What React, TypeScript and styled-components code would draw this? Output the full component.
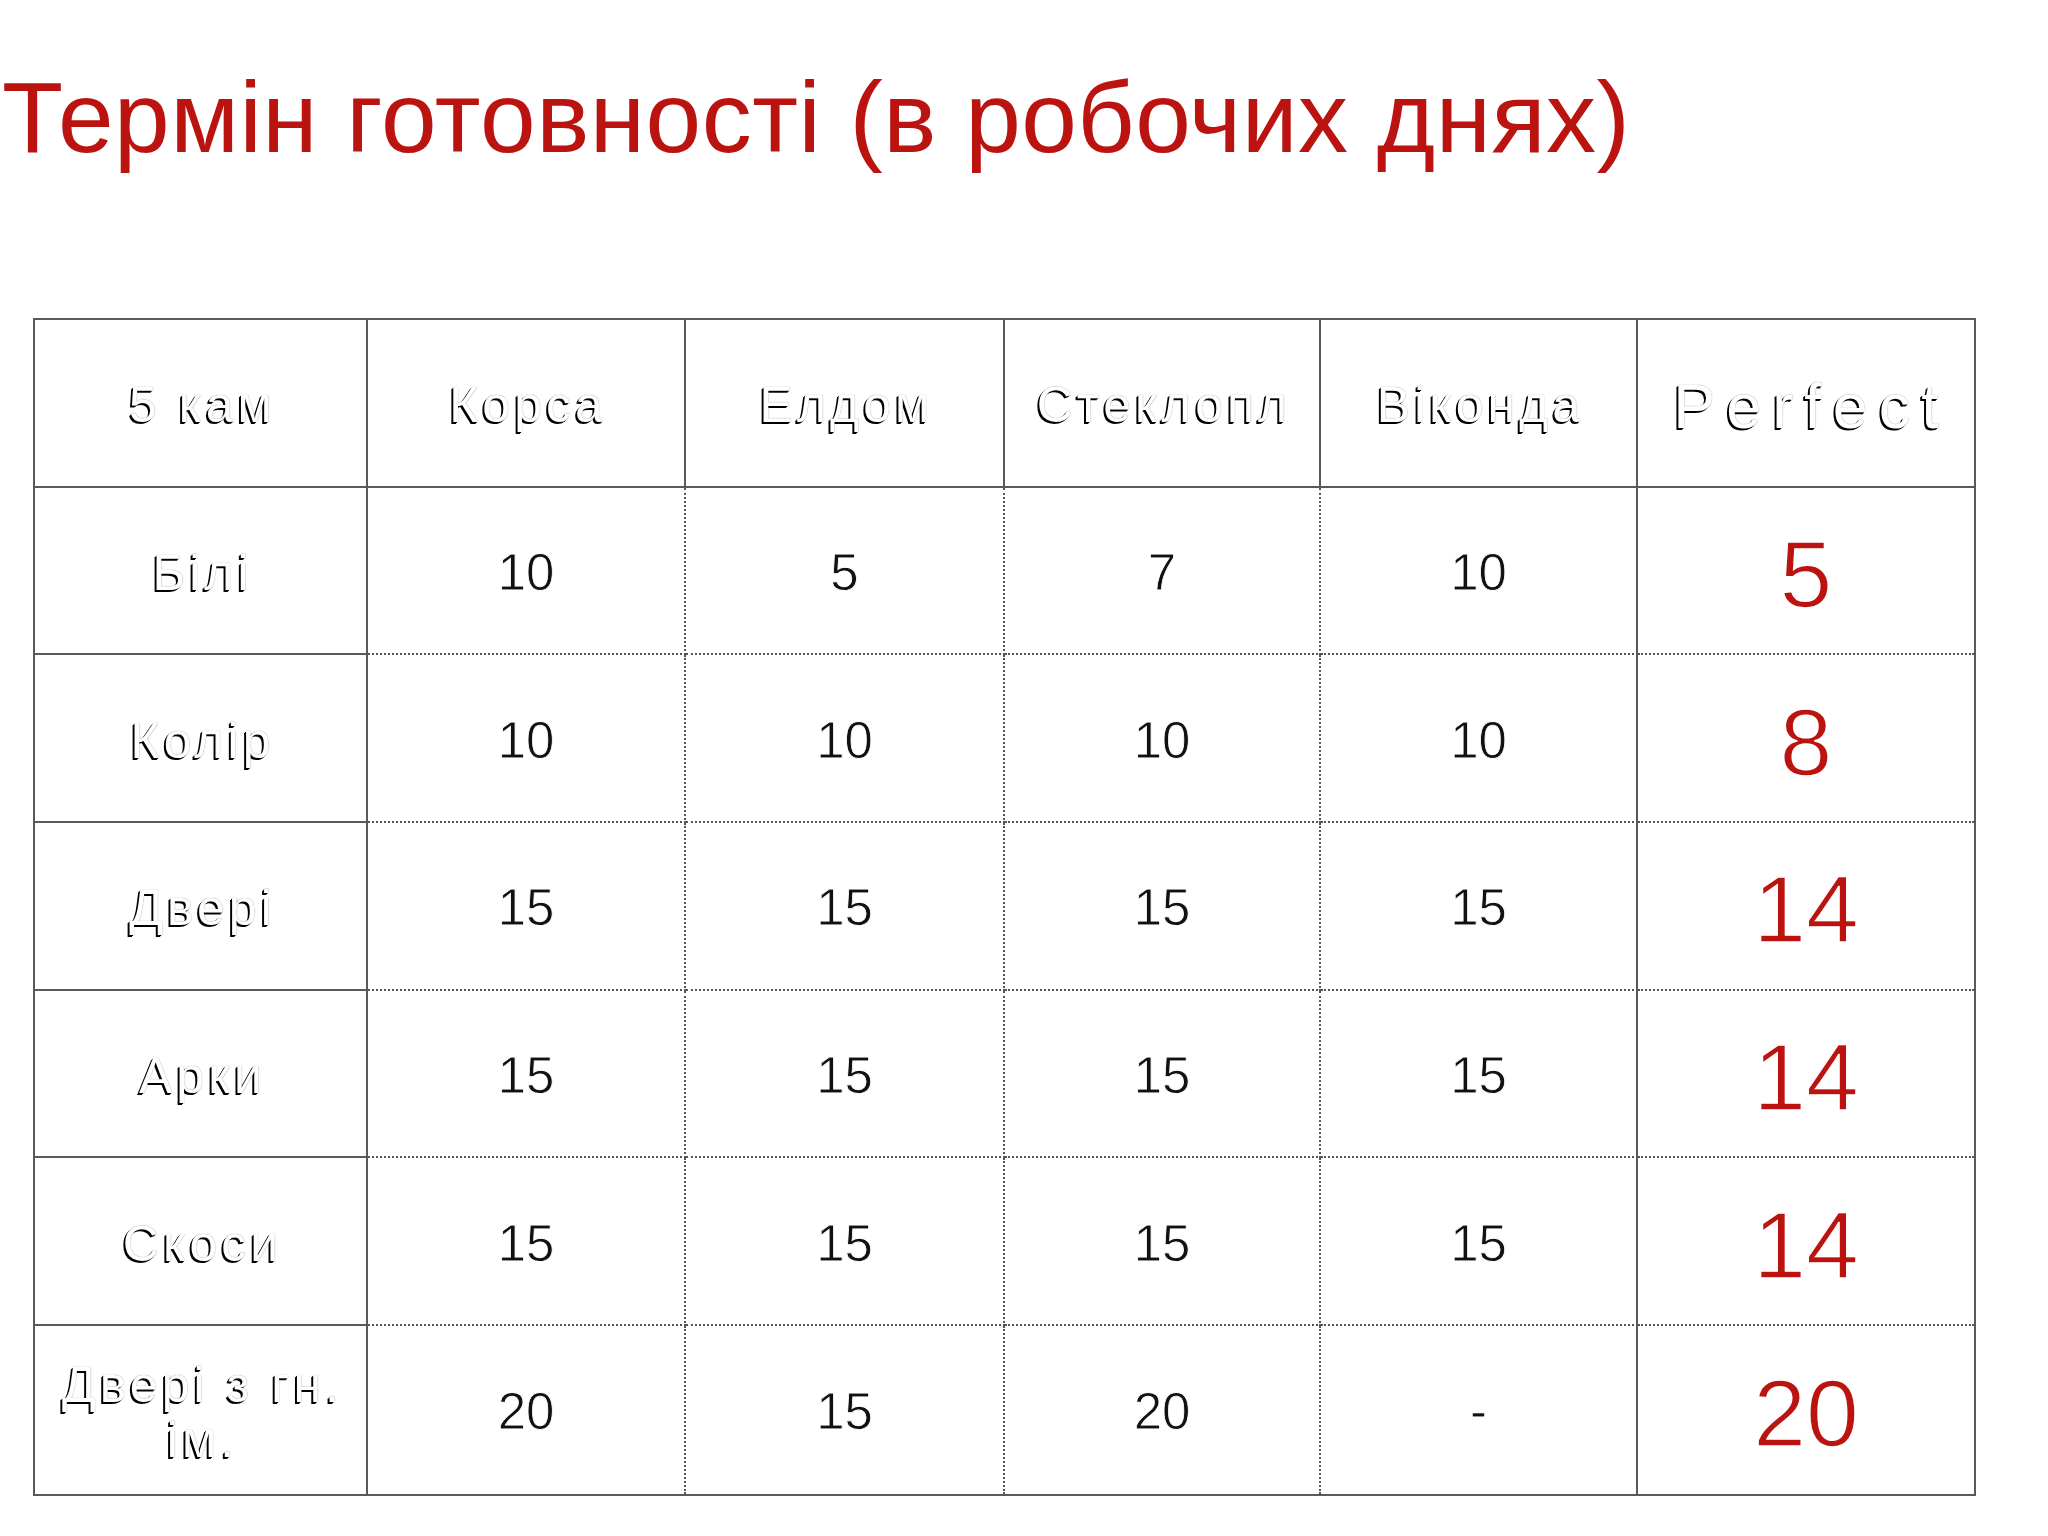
import React from 'react';
import styled, { createGlobalStyle } from 'styled-components';

const GlobalStyle = createGlobalStyle`
  html, body {
    margin: 0;
    padding: 0;
    background: #fff;
  }
  body {
    font-family: "Liberation Sans", Arial, sans-serif;
  }
`;

const Page = styled.div`
  width: 2048px;
  height: 1536px;
  overflow: hidden;
  background: #fff;
  padding: 67px 0 0 2px;
  box-sizing: border-box;
`;

const Title = styled.h1`
  margin: 0 0 151px 0;
  font-family: "Liberation Sans", Arial, sans-serif;
  font-weight: 400;
  font-size: 100px;
  line-height: 100px;
  letter-spacing: 0.5px;
  color: #bb1410;
  white-space: nowrap;
`;

const Table = styled.div`
  margin-left: 31px;
  width: 1943px;
  display: grid;
  grid-template-columns: 333px 318px 319px 316px 317px 336px;
  grid-auto-rows: 167.7px;
  border: 2px solid #5a5a5a;
  box-sizing: border-box;
`;

type Line = 'solid' | 'dotted' | 'none';

const edge = (l: Line) =>
  l === 'none' ? 'none' : l === 'solid' ? '2px solid #5a5a5a' : '2px dotted #555';

const Cell = styled.div<{ $right: Line; $bottom: Line }>`
  display: flex;
  align-items: center;
  justify-content: center;
  text-align: center;
  box-sizing: border-box;
  border-right: ${(p) => edge(p.$right)};
  border-bottom: ${(p) => edge(p.$bottom)};
  padding: 0 6px;
`;

const Embossed = styled.span<{ $big?: boolean }>`
  font-family: "Liberation Sans", Arial, sans-serif;
  font-size: ${(p) => (p.$big ? '63px' : '50px')};
  letter-spacing: ${(p) => (p.$big ? '11px' : '4px')};
  line-height: 55px;
  color: #fff;
  text-shadow: -1px 1px 0 #000, -2px 2px 0 #000, 0 0 1px #777;
  margin-top: ${(p) => (p.$big ? '8px' : '6px')};
  margin-right: ${(p) => (p.$big ? '-11px' : '-4px')};
`;

const Value = styled.span<{ $accent?: boolean }>`
  font-family: "Liberation Sans", Arial, sans-serif;
  font-size: ${(p) => (p.$accent ? '95px' : '51px')};
  color: ${(p) => (p.$accent ? '#bb1410' : '#111')};
  -webkit-text-stroke: ${(p) => (p.$accent ? '1.6px' : '0.8px')} #fff;
  line-height: 1;
  margin-top: ${(p) => (p.$accent ? '8px' : '4px')};
`;

const headers = ['5 кам', 'Корса', 'Елдом', 'Стеклопл', 'Віконда', 'Perfect'];

const rows: { label: string; values: string[]; perfect: string }[] = [
  { label: 'Білі', values: ['10', '5', '7', '10'], perfect: '5' },
  { label: 'Колір', values: ['10', '10', '10', '10'], perfect: '8' },
  { label: 'Двері', values: ['15', '15', '15', '15'], perfect: '14' },
  { label: 'Арки', values: ['15', '15', '15', '15'], perfect: '14' },
  { label: 'Скоси', values: ['15', '15', '15', '15'], perfect: '14' },
  { label: 'Двері з гн. ім.', values: ['20', '15', '20', '-'], perfect: '20' },
];

// header row and the label / Perfect column edges are solid, the data grid inside is dotted
const rightLine = (r: number, c: number): Line =>
  c === 5 ? 'none' : r === 0 || c === 0 || c === 4 ? 'solid' : 'dotted';
const bottomLine = (r: number, c: number): Line =>
  r === rows.length ? 'none' : r === 0 || c === 0 ? 'solid' : 'dotted';

export default function App() {
  return (
    <>
      <GlobalStyle />
      <Page>
        <Title>Термін готовності (в робочих днях)</Title>
        <Table>
          {headers.map((h, c) => (
            <Cell key={h} $right={rightLine(0, c)} $bottom={bottomLine(0, c)}>
              <Embossed $big={c === 5}>{h}</Embossed>
            </Cell>
          ))}
          {rows.map((row, i) => {
            const r = i + 1;
            return (
              <React.Fragment key={row.label + r}>
                <Cell $right={rightLine(r, 0)} $bottom={bottomLine(r, 0)}>
                  <Embossed>{row.label}</Embossed>
                </Cell>
                {row.values.map((v, j) => (
                  <Cell key={j} $right={rightLine(r, j + 1)} $bottom={bottomLine(r, j + 1)}>
                    <Value>{v}</Value>
                  </Cell>
                ))}
                <Cell $right={rightLine(r, 5)} $bottom={bottomLine(r, 5)}>
                  <Value $accent>{row.perfect}</Value>
                </Cell>
              </React.Fragment>
            );
          })}
        </Table>
      </Page>
    </>
  );
}
